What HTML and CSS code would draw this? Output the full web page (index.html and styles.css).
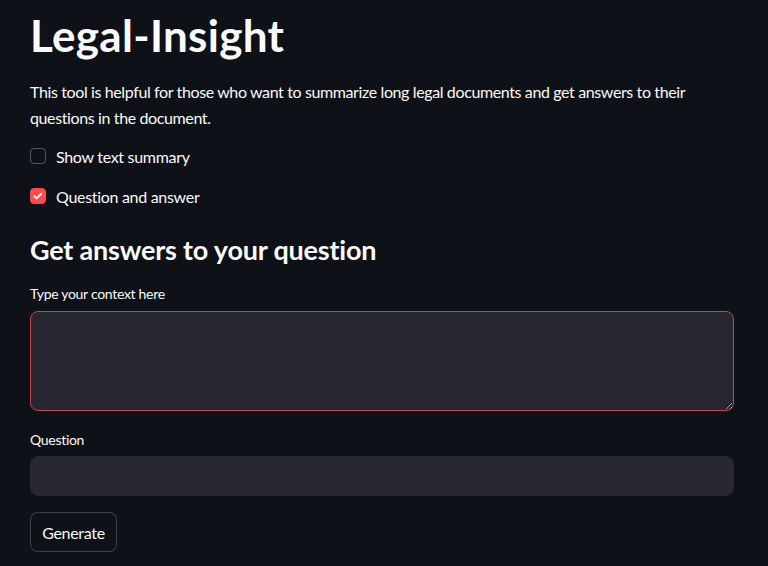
FILE: index.html
```html
<!DOCTYPE html>
<html>
<head>
<meta charset="utf-8">
<link rel="stylesheet" href="styles.css">
</head>
<body>
<main class="main">
  <h1 class="title">Legal-Insight</h1>
  <p class="intro">This tool is helpful for those who want to summarize long legal documents and get answers to their questions in the document.</p>
  <label class="check">
    <span class="box"></span>
    <span class="check-label">Show text summary</span>
  </label>
  <label class="check">
    <span class="box box-on">
      <svg viewBox="0 0 16 16" width="12" height="12"><path d="M3.2 8.3l3 3 6.4-6.6" fill="none" stroke="#fff" stroke-width="2.4" stroke-linecap="round" stroke-linejoin="round"/></svg>
    </span>
    <span class="check-label">Question and answer</span>
  </label>
  <h3 class="subtitle">Get answers to your question</h3>
  <div class="field">
    <div class="field-label">Type your context here</div>
    <textarea class="area"></textarea>
  </div>
  <div class="field field-q">
    <div class="field-label">Question</div>
    <input class="input" type="text">
  </div>
  <button class="btn">Generate</button>
</main>
</body>
</html>
```
FILE: styles.css
```css
html, body {
  margin: 0;
  padding: 0;
  background: #0e1117;
  color: #fafafa;
  font-family: "Lato", "Open Sans", sans-serif;
  font-variant-ligatures: none;
}
.main {
  width: 704px;
  padding: 0 34px 0 30px;
  display: flex;
  flex-direction: column;
}
.title {
  margin: 0;
  padding-top: 11px;
  font-size: 44px;
  letter-spacing: 0.3px;
  line-height: 49px;
  font-weight: 700;
  height: 49px;
}
.intro {
  margin: 19px 0 0 0;
  font-size: 16px;
  letter-spacing: -0.38px;
  line-height: 25.6px;
}
.check {
  display: flex;
  align-items: center;
  gap: 10px;
  height: 24px;
  margin-top: 16px;
  font-size: 16px;
  letter-spacing: -0.3px;
}
.intro + .check { margin-top: 14px; }
.box {
  width: 14px;
  height: 14px;
  border: 1px solid rgba(250,250,250,0.3);
  border-radius: 4px;
  display: flex;
  align-items: center;
  justify-content: center;
  box-sizing: content-box;
}
.box-on {
  background: #ff4b4b;
  border-color: #ff4b4b;
}
.subtitle {
  margin: 24px 0 0 0;
  font-size: 27px;
  letter-spacing: -0.2px;
  line-height: 36px;
  font-weight: 700;
}
.field {
  display: flex;
  flex-direction: column;
}
.field-label {
  font-size: 14px;
  letter-spacing: -0.3px;
  line-height: 20px;
  margin-bottom: 7px;
}
.field-q .field-label { margin-bottom: 6px; }
.subtitle + .field { margin-top: 16px; }
.field + .field { margin-top: 19px; }
.area {
  box-sizing: border-box;
  height: 100px;
  background: #262730;
  border: 1px solid #c4454b;
  border-radius: 8px;
  resize: vertical;
  margin: 0;
  color: #fafafa;
}
.input {
  box-sizing: border-box;
  height: 40px;
  background: #262730;
  border: 1px solid #262730;
  border-radius: 8px;
  margin: 0;
  color: #fafafa;
}
.btn {
  align-self: flex-start;
  margin-top: 16px;
  height: 40px;
  width: 87px;
  padding: 0;
  background: #0e1117;
  border: 1px solid rgba(250,250,250,0.2);
  border-radius: 8px;
  color: #fafafa;
  font-family: inherit;
  font-size: 16px;
  letter-spacing: -0.3px;
}
```
